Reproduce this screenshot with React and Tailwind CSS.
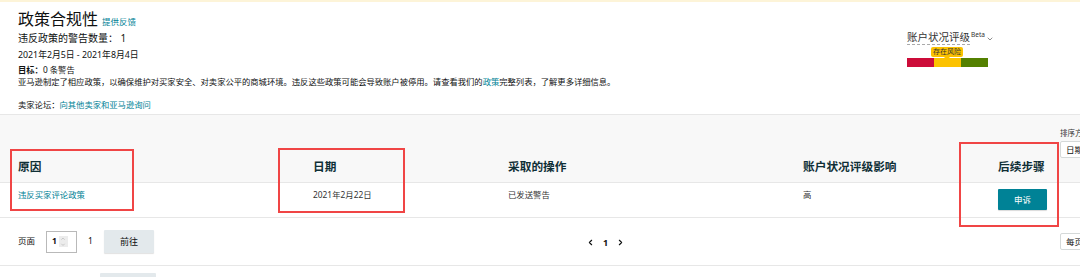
import { ChevronDown, ChevronLeft, ChevronRight, ChevronUp } from 'lucide-react';

const cols = 'grid grid-cols-[295px_195px_295px_195px_62px] pl-[18px]';

export default function App() {
  return (
    <div className="relative w-[1080px] h-[277px] overflow-hidden bg-white text-[#0f1111] font-[family-name:'Noto_Sans','Noto_Sans_CJK_SC',sans-serif]">
      <div className="h-[2px] bg-[#fdf4d8]" />
      <Header />
      <Table />
      {/* annotation boxes */}
      <div className="absolute left-[10px] top-[149px] w-[124px] h-[62px] border-2 border-[#f04545]" />
      <div className="absolute left-[278px] top-[148px] w-[127px] h-[65px] border-2 border-[#f04545]" />
      <div className="absolute left-[959px] top-[142px] w-[100px] h-[85px] border-2 border-[#f04545]" />
    </div>
  );
}

function Header() {
  return (
    <div className="flex pl-[18px] pt-[7px] pb-[3px]">
      <div className="flex-1">
        <div className="flex items-baseline gap-[4px] h-[20px] leading-[20px] overflow-visible">
          <h1 className="text-[16px] leading-[20px] text-[#0f1111]">政策合规性</h1>
          <a className="text-[8.5px] leading-[20px] text-[#008296]">提供反馈</a>
        </div>
        <div className="mt-[2px] h-[14px] text-[10px] leading-[14px]">违反政策的警告数量： 1</div>
        <div className="mt-[4px] h-[12px] text-[8.8px] leading-[12px]">2021年2月5日 - 2021年8月4日</div>
        <div className="mt-[3px] h-[12px] text-[8.3px] leading-[12px]">
          <span className="font-bold">目标：</span>0 条警告
        </div>
        <div className="h-[12px] text-[8.3px] leading-[12px]">
          亚马逊制定了相应政策，以确保维护对买家安全、对卖家公平的商城环境。违反这些政策可能会导致账户被停用。请查看我们的
          <a className="text-[#008296]">政策</a>完整列表，了解更多详细信息。
        </div>
        <div className="mt-[11px] h-[12px] text-[8.3px] leading-[12px]">
          卖家论坛：<a className="text-[#008296]">向其他卖家和亚马逊询问</a>
        </div>
      </div>
      <HealthRating />
    </div>
  );
}

function HealthRating() {
  return (
    <div className="w-[173px] shrink-0 pt-[22px]">
      <div className="flex items-start">
        <span className="text-[10.5px] leading-[13px] text-[#333] border-b border-dashed border-[#aaa]">账户状况评级</span>
        <span className="text-[6.5px] leading-[8px] text-[#333] ml-[1px]">Beta</span>
        <ChevronDown size={8} strokeWidth={2} className="text-[#555] mt-[4px] ml-[1px]" />
      </div>
      <div className="pl-[24px] mt-[2px]">
        <div className="relative w-[32px] h-[10px] rounded-[2px] bg-[#fcc200] text-[7px] leading-[10px] text-center text-[#333]">
          存在风险
          <div className="absolute left-[13px] top-[10px] w-0 h-0 border-l-[3px] border-r-[3px] border-t-[3px] border-l-transparent border-r-transparent border-t-[#fcc200]" />
        </div>
      </div>
      <div className="flex mt-[1px] h-[9px]">
        <div className="w-[27px] bg-[#cc0c39]" />
        <div className="w-[27px] bg-[#fcc200]" />
        <div className="w-[27px] bg-[#538000]" />
      </div>
    </div>
  );
}

function Table() {
  return (
    <div>
      {/* header band */}
      <div className="flex h-[69px] bg-[#f8f8f8] border-t border-b border-[#e7e7e7]">
        <div className={`${cols} w-[1060px] shrink-0 items-end pb-[8px] text-[11.7px] leading-[16px] font-bold text-[#0f2f36]`}>
          <div>原因</div>
          <div>日期</div>
          <div>采取的操作</div>
          <div>账户状况评级影响</div>
          <div className="whitespace-nowrap">后续步骤</div>
        </div>
        <div className="shrink-0 pt-[13px]">
          <div className="text-[7.5px] leading-[10px] text-[#333] whitespace-nowrap">排序方式</div>
          <div className="mt-[3px] w-[40px] h-[17px] bg-white border border-[#d5d9d9] rounded-[2px] px-[5px] text-[8.5px] leading-[15px] whitespace-nowrap">日期</div>
        </div>
      </div>
      {/* row */}
      <div className="flex h-[35px] border-b border-[#e7e7e7]">
        <div className={`${cols} w-[1060px] shrink-0 pt-[6px] text-[8.4px] leading-[12px] text-[#333]`}>
          <a className="text-[#008296]">违反买家评论政策</a>
          <div>2021年2月22日</div>
          <div>已发送警告</div>
          <div>高</div>
          <div>
            <button className="w-[49px] h-[21px] bg-[#008296] text-white text-[8.5px] rounded-[1px] shadow-[0_1px_1px_rgba(0,0,0,0.15)]">申诉</button>
          </div>
        </div>
      </div>
      {/* pagination */}
      <div className="flex items-center h-[48px] border-b border-[#e7e7e7]">
        <div className="flex items-center w-[1060px] shrink-0 pl-[18px]">
          <div className="flex items-center w-[520px]">
            <span className="text-[8.5px]">页面</span>
            <div className="ml-[11px] flex items-center w-[31px] h-[22px] border border-[#b9b9b9] bg-white pl-[5px]">
              <span className="text-[8.5px] font-bold">1</span>
              <div className="ml-[2px] w-[9px] h-[11px] bg-[#ececec] flex flex-col items-center justify-center text-[#999]">
                <ChevronUp size={6} strokeWidth={2} />
                <ChevronDown size={6} strokeWidth={2} />
              </div>
            </div>
            <span className="ml-[11px] text-[8.5px]">1</span>
            <button className="ml-[11px] w-[50px] h-[23px] bg-[#e3e9ec] text-[9px] text-[#0f1111] rounded-[1px] shadow-[0_1px_1px_rgba(0,0,0,0.12)]">前往</button>
          </div>
          <div className="flex items-center gap-[8px] ml-[48px] mt-[2px] text-[#0f1111]">
            <ChevronLeft size={9} strokeWidth={3} />
            <span className="text-[9px] font-bold">1</span>
            <ChevronRight size={9} strokeWidth={3} />
          </div>
        </div>
        <div className="shrink-0 w-[40px] h-[17px] bg-white border border-[#d5d9d9] rounded-[2px] px-[5px] text-[8.5px] leading-[15px] whitespace-nowrap">每页</div>
      </div>
      <div className="pl-[100px] pt-[7px]">
        <div className="w-[56px] h-[10px] bg-[#e3e9ec] rounded-[1px]" />
      </div>
    </div>
  );
}
